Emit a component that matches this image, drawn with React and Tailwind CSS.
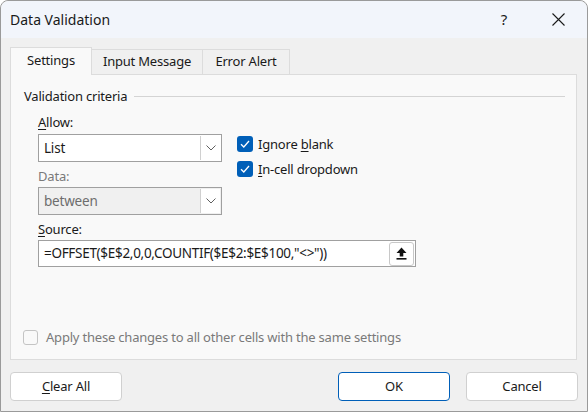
import React from "react";

const font = { fontFamily: '"Segoe UI", "Noto Sans", "Open Sans", sans-serif' };

function Chevron() {
  return (
    <svg width="10" height="6" viewBox="0 0 10 6" fill="none">
      <path d="M0.5 0.5 L5 5 L9.5 0.5" stroke="#606060" strokeWidth="1" />
    </svg>
  );
}

function Check() {
  return (
    <svg width="10" height="8" viewBox="0 0 10 8" fill="none">
      <path d="M1 4.2 L3.8 7 L9 1" stroke="#ffffff" strokeWidth="1.3" />
    </svg>
  );
}

function Combo({ value, disabled }) {
  return (
    <div
      className={`flex h-[28px] w-[184px] items-stretch border border-[#a0a0a0] ${
        disabled ? "bg-[#f0f0f0] text-[#6d6d6d]" : "bg-white text-[#1a1a1a]"
      }`}
    >
      <div className="flex flex-1 items-center pl-[5px] text-[13.5px]">{value}</div>
      <div className="my-[1px] mr-[1px] flex w-[20px] items-center justify-center border-l border-[#d0d0d0] bg-white">
        <Chevron />
      </div>
    </div>
  );
}

export default function App() {
  return (
    <div className="h-[412px] w-[588px] overflow-hidden bg-white tracking-[-0.2px]" style={font}>
      <div className="flex h-[412px] w-[588px] flex-col rounded-t-[8px] border border-[#9a9a9a] bg-[#f0f0f0]">
        {/* title bar */}
        <div className="flex h-[37px] items-center rounded-t-[8px] bg-[#f2f5fb] pl-[9px] pr-[22px]">
          <div className="flex-1 text-[14px] tracking-normal text-[#1a1a1a]">Data Validation</div>
          <div className="mr-[45px] text-[15px] text-[#1a1a1a]">?</div>
          <svg width="13" height="13" viewBox="0 0 13 13">
            <path d="M0.5 0.5 L12.5 12.5 M12.5 0.5 L0.5 12.5" stroke="#1a1a1a" strokeWidth="1.1" />
          </svg>
        </div>

        {/* body */}
        <div className="flex flex-1 flex-col px-[9px] pb-[10px]">
          {/* tabs */}
          <div className="mt-[9px] flex h-[27px] items-end text-[13px] text-[#1a1a1a]">
            <div className="relative z-10 -mb-px flex h-[28px] w-[82px] items-center justify-center border border-b-0 border-[#dcdcdc] bg-[#f9f9f9] pb-[1px]">
              Settings
            </div>
            <div className="flex h-[25px] w-[111px] items-center justify-center border border-b-0 border-l-0 border-[#dcdcdc] bg-[#f0f0f0]">
              Input Message
            </div>
            <div className="flex h-[25px] w-[87px] items-center justify-center border border-b-0 border-l-0 border-[#dcdcdc] bg-[#f0f0f0]">
              Error Alert
            </div>
          </div>

          {/* panel */}
          <div className="flex h-[286px] w-[567px] flex-col border border-[#dcdcdc] bg-[#f9f9f9] text-[13px] text-[#1a1a1a]">
            <div className="mt-[12px] flex items-center pl-[13px] pr-[11px]">
              <span className="leading-[18px]">Validation criteria</span>
              <div className="ml-[7px] h-px flex-1 bg-[#d4d4d4]" />
            </div>

            <div className="mt-[8px] flex pl-[27px]">
              <div className="flex flex-col">
                <div className="leading-[18px]">
                  <span className="underline underline-offset-2">A</span>llow:
                </div>
                <div className="mt-[3px]">
                  <Combo value="List" />
                </div>
                <div className="mt-[5px] leading-[18px] text-[#7a7a7a]">Data:</div>
                <div className="mt-[2px]">
                  <Combo value="between" disabled />
                </div>
              </div>
              <div className="ml-[15px] mt-[23px] flex flex-col gap-[9px]">
                <div className="flex items-center">
                  <div className="flex h-[16px] w-[16px] items-center justify-center rounded-[3px] bg-[#005fb8]">
                    <Check />
                  </div>
                  <span className="ml-[5px] leading-[16px]">
                    Ignore <span className="underline underline-offset-2">b</span>lank
                  </span>
                </div>
                <div className="flex items-center">
                  <div className="flex h-[16px] w-[16px] items-center justify-center rounded-[3px] bg-[#005fb8]">
                    <Check />
                  </div>
                  <span className="ml-[5px] leading-[16px]">
                    <span className="underline underline-offset-2">I</span>n-cell dropdown
                  </span>
                </div>
              </div>
            </div>

            <div className="mt-[5px] pl-[27px] leading-[18px]">
              <span className="underline underline-offset-2">S</span>ource:
            </div>
            <div className="ml-[27px] mt-[2px] flex h-[27px] w-[378px] items-center border border-[#a0a0a0] bg-white">
              <div className="flex-1 pl-[5px] text-[13.5px] tracking-[-0.3px]">
                =OFFSET($E$2,0,0,COUNTIF($E$2:$E$100,"&lt;&gt;"))
              </div>
              <div className="mr-[1px] flex h-[24px] w-[25px] items-center justify-center rounded-[3px] border border-[#c8c8c8] bg-white">
                <svg width="11" height="13" viewBox="0 0 11 13">
                  <path d="M5.5 0.5 L10.5 6 L7.3 6 L7.3 9.5 L3.7 9.5 L3.7 6 L0.5 6 Z" fill="#111" />
                  <rect x="0.5" y="11" width="10" height="1.6" fill="#111" />
                </svg>
              </div>
            </div>

            <div className="mb-[13px] ml-[12px] mt-auto flex items-center">
              <div className="h-[15px] w-[15px] rounded-[3px] border border-[#c4c4c4] bg-[#f9f9f9]" />
              <span className="ml-[8px] leading-[18px] text-[#7a7a7a]">
                Apply these changes to all other cells with the same settings
              </span>
            </div>
          </div>

          {/* buttons */}
          <div className="mt-[12px] flex text-[13px] text-[#1a1a1a]">
            <div className="flex h-[29px] w-[112px] items-center justify-center rounded-[4px] border border-[#d0d0d0] bg-white">
              <span>
                <span className="underline underline-offset-2">C</span>lear All
              </span>
            </div>
            <div className="ml-auto flex h-[29px] w-[112px] items-center justify-center rounded-[4px] border border-[#005fb8] bg-white">
              OK
            </div>
            <div className="ml-[16px] flex h-[29px] w-[112px] items-center justify-center rounded-[4px] border border-[#d0d0d0] bg-white">
              Cancel
            </div>
          </div>
        </div>
      </div>
    </div>
  );
}
